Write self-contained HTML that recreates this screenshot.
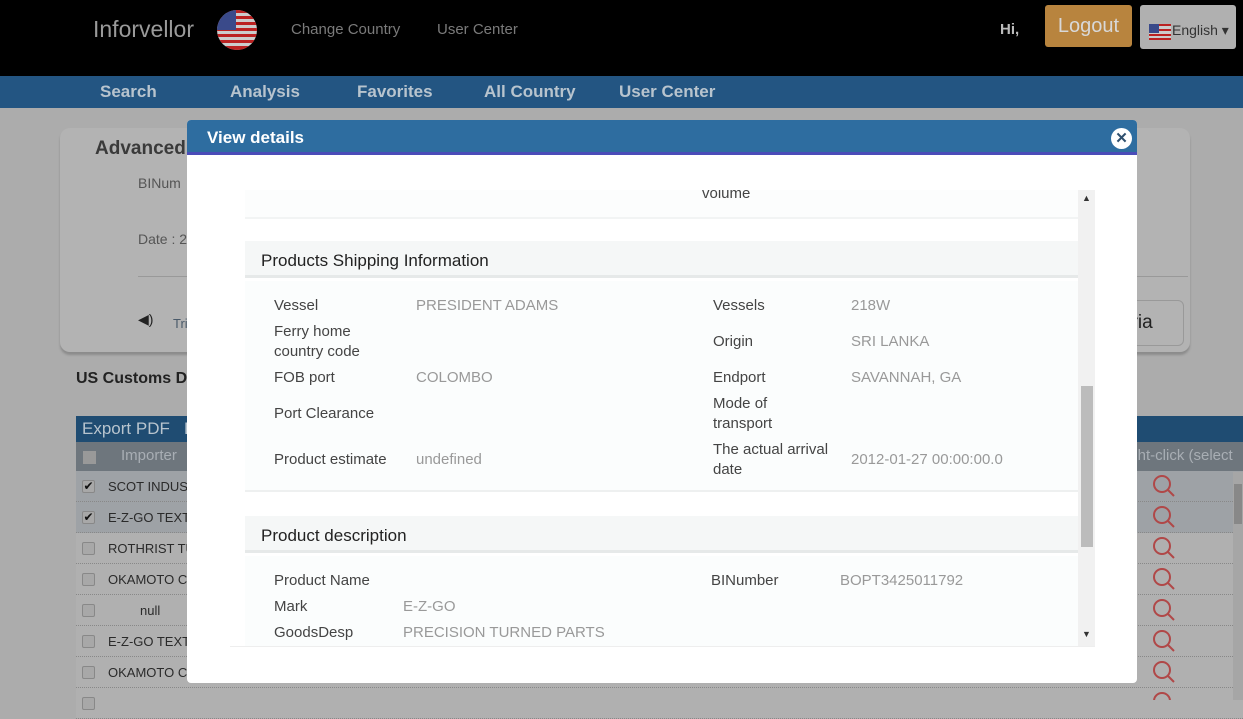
<!DOCTYPE html>
<html><head><meta charset="utf-8"><style>
*{margin:0;padding:0;box-sizing:border-box}
body{width:1243px;height:700px;overflow:hidden;position:relative;background:#acacac;font-family:"Liberation Sans",sans-serif}
.a{position:absolute}
.hdr{left:0;top:0;width:1243px;height:76px;background:#000}
.nav{left:0;top:76px;width:1243px;height:32px;background:#235582}
.nav span{position:absolute;top:6px;color:#b8c4ce;font-weight:bold;font-size:17px}
.row{position:absolute;left:76px;width:1167px;height:31px;border-bottom:1px dotted #888;background:#b0b0b0;font-size:13px;color:#2a2a2a}
.row .cb{position:absolute;left:6px;top:9px;width:13px;height:13px;background:#a8a8a8;border:1px solid #888;border-radius:2px;font-size:12px;line-height:11px;text-align:center;color:#111}
.row .t{position:absolute;left:32px;top:8px}
.lab{position:absolute;color:#444;font-size:15px;line-height:20px}
.val{position:absolute;color:#999;font-size:15px;line-height:20px}
</style></head><body>
<div class="a hdr"></div>
<div class="a" style="left:93px;top:16px;color:#9a9a9a;font-size:23px">Inforvellor</div>
<svg class="a" style="left:217px;top:10px" width="40" height="40" viewBox="0 0 40 40"><defs><clipPath id="c"><circle cx="20" cy="20" r="20"/></clipPath></defs><g clip-path="url(#c)"><rect width="40" height="40" fill="#ccc"/><g fill="#b22"><rect y="0" width="40" height="3"/><rect y="6" width="40" height="3"/><rect y="12" width="40" height="3"/><rect y="18" width="40" height="3"/><rect y="24" width="40" height="3"/><rect y="30" width="40" height="3"/><rect y="36" width="40" height="4"/></g><rect width="19" height="20" fill="#3a4a8a"/></g></svg>
<div class="a" style="left:291px;top:21px;color:#7a7a7a;font-size:15px">Change Country</div>
<div class="a" style="left:437px;top:21px;color:#7a7a7a;font-size:15px">User Center</div>
<div class="a" style="left:1000px;top:21px;color:#bbb;font-size:15px;font-weight:bold">Hi,</div>
<div class="a" style="left:1045px;top:5px;width:87px;height:42px;background:#b8843e;border-radius:3px;color:#d8d8d8;font-size:20px;text-align:center;line-height:42px">Logout</div>
<div class="a" style="left:1140px;top:5px;width:96px;height:44px;background:#b0b0b0;border-radius:3px"></div>
<svg class="a" style="left:1149px;top:24px" width="22" height="16"><rect width="22" height="16" fill="#ccc"/><g fill="#b22"><rect y="0" width="22" height="2"/><rect y="5" width="22" height="2"/><rect y="10" width="22" height="2"/><rect y="14" width="22" height="2"/></g><rect width="10" height="9" fill="#3a4a8a"/></svg>
<div class="a" style="left:1172px;top:22px;color:#333;font-size:14px">English ▾</div>
<div class="a nav"><span style="left:100px">Search</span><span style="left:230px">Analysis</span><span style="left:357px">Favorites</span><span style="left:484px">All Country</span><span style="left:619px">User Center</span></div>
<div class="a" style="left:60px;top:128px;width:1130px;height:224px;background:#b3b3b3;border-radius:10px;box-shadow:0 3px 2px #8c8c8c"></div>
<div class="a" style="left:95px;top:138px;color:#3a3a3a;font-size:19px;font-weight:bold">Advanced</div>
<div class="a" style="left:138px;top:175px;color:#555;font-size:14px">BINum</div>
<div class="a" style="left:138px;top:231px;color:#555;font-size:14px">Date : 2</div>
<div class="a" style="left:138px;top:276px;width:1050px;height:1px;background:#999"></div>
<div class="a" style="left:138px;top:311px;color:#222;font-size:14px">◀)</div>
<div class="a" style="left:173px;top:316px;color:#4a5a6a;font-size:13px">Tri</div>
<div class="a" style="left:1100px;top:300px;width:84px;height:46px;border:1px solid #999;border-radius:6px;color:#222;font-size:19px;line-height:44px;padding-left:20px">eria</div>
<div class="a" style="left:76px;top:370px;color:#222;font-size:16px;font-weight:bold">US Customs D</div>
<div class="a" style="left:76px;top:416px;width:1167px;height:26px;background:#1f4c72;color:#b8c4ce;font-size:17px;padding:3px 6px">Export PDF &nbsp; E</div>
<div class="a" style="left:76px;top:442px;width:1167px;height:29px;background:#6e767d;color:#a8aeb4;font-size:15px"><div class="a" style="left:7px;top:9px;width:13px;height:13px;background:#999"></div><span class="a" style="left:45px;top:5px">Importer</span><span class="a" style="left:1050px;top:5px">ight-click (select</span></div>
<div class="row" style="top:471px;background:#9ea2a6"><div class="cb">✔</div><span class="t">SCOT INDUST</span></div>
<div class="row" style="top:502px;background:#9ea2a6"><div class="cb">✔</div><span class="t">E-Z-GO TEXTR</span></div>
<div class="row" style="top:533px"><div class="cb"></div><span class="t">ROTHRIST TU</span></div>
<div class="row" style="top:564px"><div class="cb"></div><span class="t">OKAMOTO CO</span></div>
<div class="row" style="top:595px"><div class="cb"></div><span class="t" style="left:64px">null</span></div>
<div class="row" style="top:626px"><div class="cb"></div><span class="t">E-Z-GO TEXTR</span></div>
<div class="row" style="top:657px"><div class="cb"></div><span class="t">OKAMOTO CO</span></div>
<div class="row" style="top:688px"><div class="cb"></div></div>
<svg class="a" style="left:1150px;top:470px" width="30" height="230"><g fill="none" stroke="#b04848" stroke-width="2"><circle cx="12" cy="14" r="8"/><path d="M18 20l6 6"/><circle cx="12" cy="45" r="8"/><path d="M18 51l6 6"/><circle cx="12" cy="76" r="8"/><path d="M18 82l6 6"/><circle cx="12" cy="107" r="8"/><path d="M18 113l6 6"/><circle cx="12" cy="138" r="8"/><path d="M18 144l6 6"/><circle cx="12" cy="169" r="8"/><path d="M18 175l6 6"/><circle cx="12" cy="200" r="8"/><path d="M18 206l6 6"/><circle cx="12" cy="231" r="8"/></g></svg>
<div class="a" style="left:1233px;top:472px;width:10px;height:228px;background:#a6a6a6"><div style="margin:12px 1px;height:40px;background:#888"></div></div>

<!-- modal -->
<div class="a" style="left:187px;top:120px;width:950px;height:563px;background:#fff;border-radius:4px"></div>
<div class="a" style="left:187px;top:120px;width:950px;height:35px;background:#2e6da0;border-radius:4px 4px 0 0;border-bottom:3px solid #4a4cb8"></div>
<div class="a" style="left:207px;top:128px;color:#fff;font-size:17px;font-weight:bold">View details</div>
<div class="a" style="left:1111px;top:128px;width:21px;height:21px;border-radius:50%;background:#fff;color:#2e4f6e;font-size:15px;font-weight:bold;text-align:center;line-height:21px">✕</div>
<div class="a" style="left:230px;top:190px;width:865px;height:457px;background:#fff;overflow:hidden;border-bottom:1px solid #eee">
 <div class="a" style="left:15px;top:0;width:833px;height:29px;background:#fcfdfd;border-bottom:2px solid #f2f4f4"></div>
 <div class="a" style="left:472px;top:-5px;color:#444;font-size:15px">volume</div>
 <div class="a" style="left:15px;top:51px;width:833px;height:37px;background:#f5f7f7;border-bottom:3px solid #e6e9e9"></div>
 <div class="a" style="left:31px;top:61px;color:#222;font-size:17px">Products Shipping Information</div>
 <div class="a" style="left:15px;top:91px;width:833px;height:211px;background:#fbfdfd;border-bottom:2px solid #eef0f0"></div>
 <div class="a" style="left:15px;top:326px;width:833px;height:37px;background:#f5f7f7;border-bottom:3px solid #e6e9e9"></div>
 <div class="a" style="left:31px;top:336px;color:#222;font-size:17px">Product description</div>
 <div class="a" style="left:15px;top:366px;width:833px;height:100px;background:#fbfdfd"></div>
 <div class="a" style="left:848px;top:0;width:17px;height:457px;background:#f1f1f1"></div>
 <div class="a" style="left:851px;top:196px;width:12px;height:161px;background:#bcbcbc"></div>
 <div class="a" style="left:852px;top:3px;font-size:9px;color:#333">▲</div>
 <div class="a" style="left:852px;top:439px;font-size:9px;color:#333">▼</div>
</div>
<div class="lab" style="left:274px;top:296px">Vessel</div><div class="val" style="left:416px;top:296px">PRESIDENT ADAMS</div>
<div class="lab" style="left:274px;top:322px">Ferry home<br>country code</div>
<div class="lab" style="left:274px;top:368px">FOB port</div><div class="val" style="left:416px;top:368px">COLOMBO</div>
<div class="lab" style="left:274px;top:404px">Port Clearance</div>
<div class="lab" style="left:274px;top:450px">Product estimate</div><div class="val" style="left:416px;top:450px">undefined</div>
<div class="lab" style="left:713px;top:296px">Vessels</div><div class="val" style="left:851px;top:296px">218W</div>
<div class="lab" style="left:713px;top:332px">Origin</div><div class="val" style="left:851px;top:332px">SRI LANKA</div>
<div class="lab" style="left:713px;top:368px">Endport</div><div class="val" style="left:851px;top:368px">SAVANNAH, GA</div>
<div class="lab" style="left:713px;top:394px">Mode of<br>transport</div>
<div class="lab" style="left:713px;top:440px">The actual arrival<br>date</div><div class="val" style="left:851px;top:450px">2012-01-27 00:00:00.0</div>
<div class="lab" style="left:274px;top:571px">Product Name</div>
<div class="lab" style="left:711px;top:571px">BINumber</div><div class="val" style="left:840px;top:571px">BOPT3425011792</div>
<div class="lab" style="left:274px;top:597px">Mark</div><div class="val" style="left:403px;top:597px">E-Z-GO</div>
<div class="lab" style="left:274px;top:623px">GoodsDesp</div><div class="val" style="left:403px;top:623px">PRECISION TURNED PARTS</div>
</body></html>
